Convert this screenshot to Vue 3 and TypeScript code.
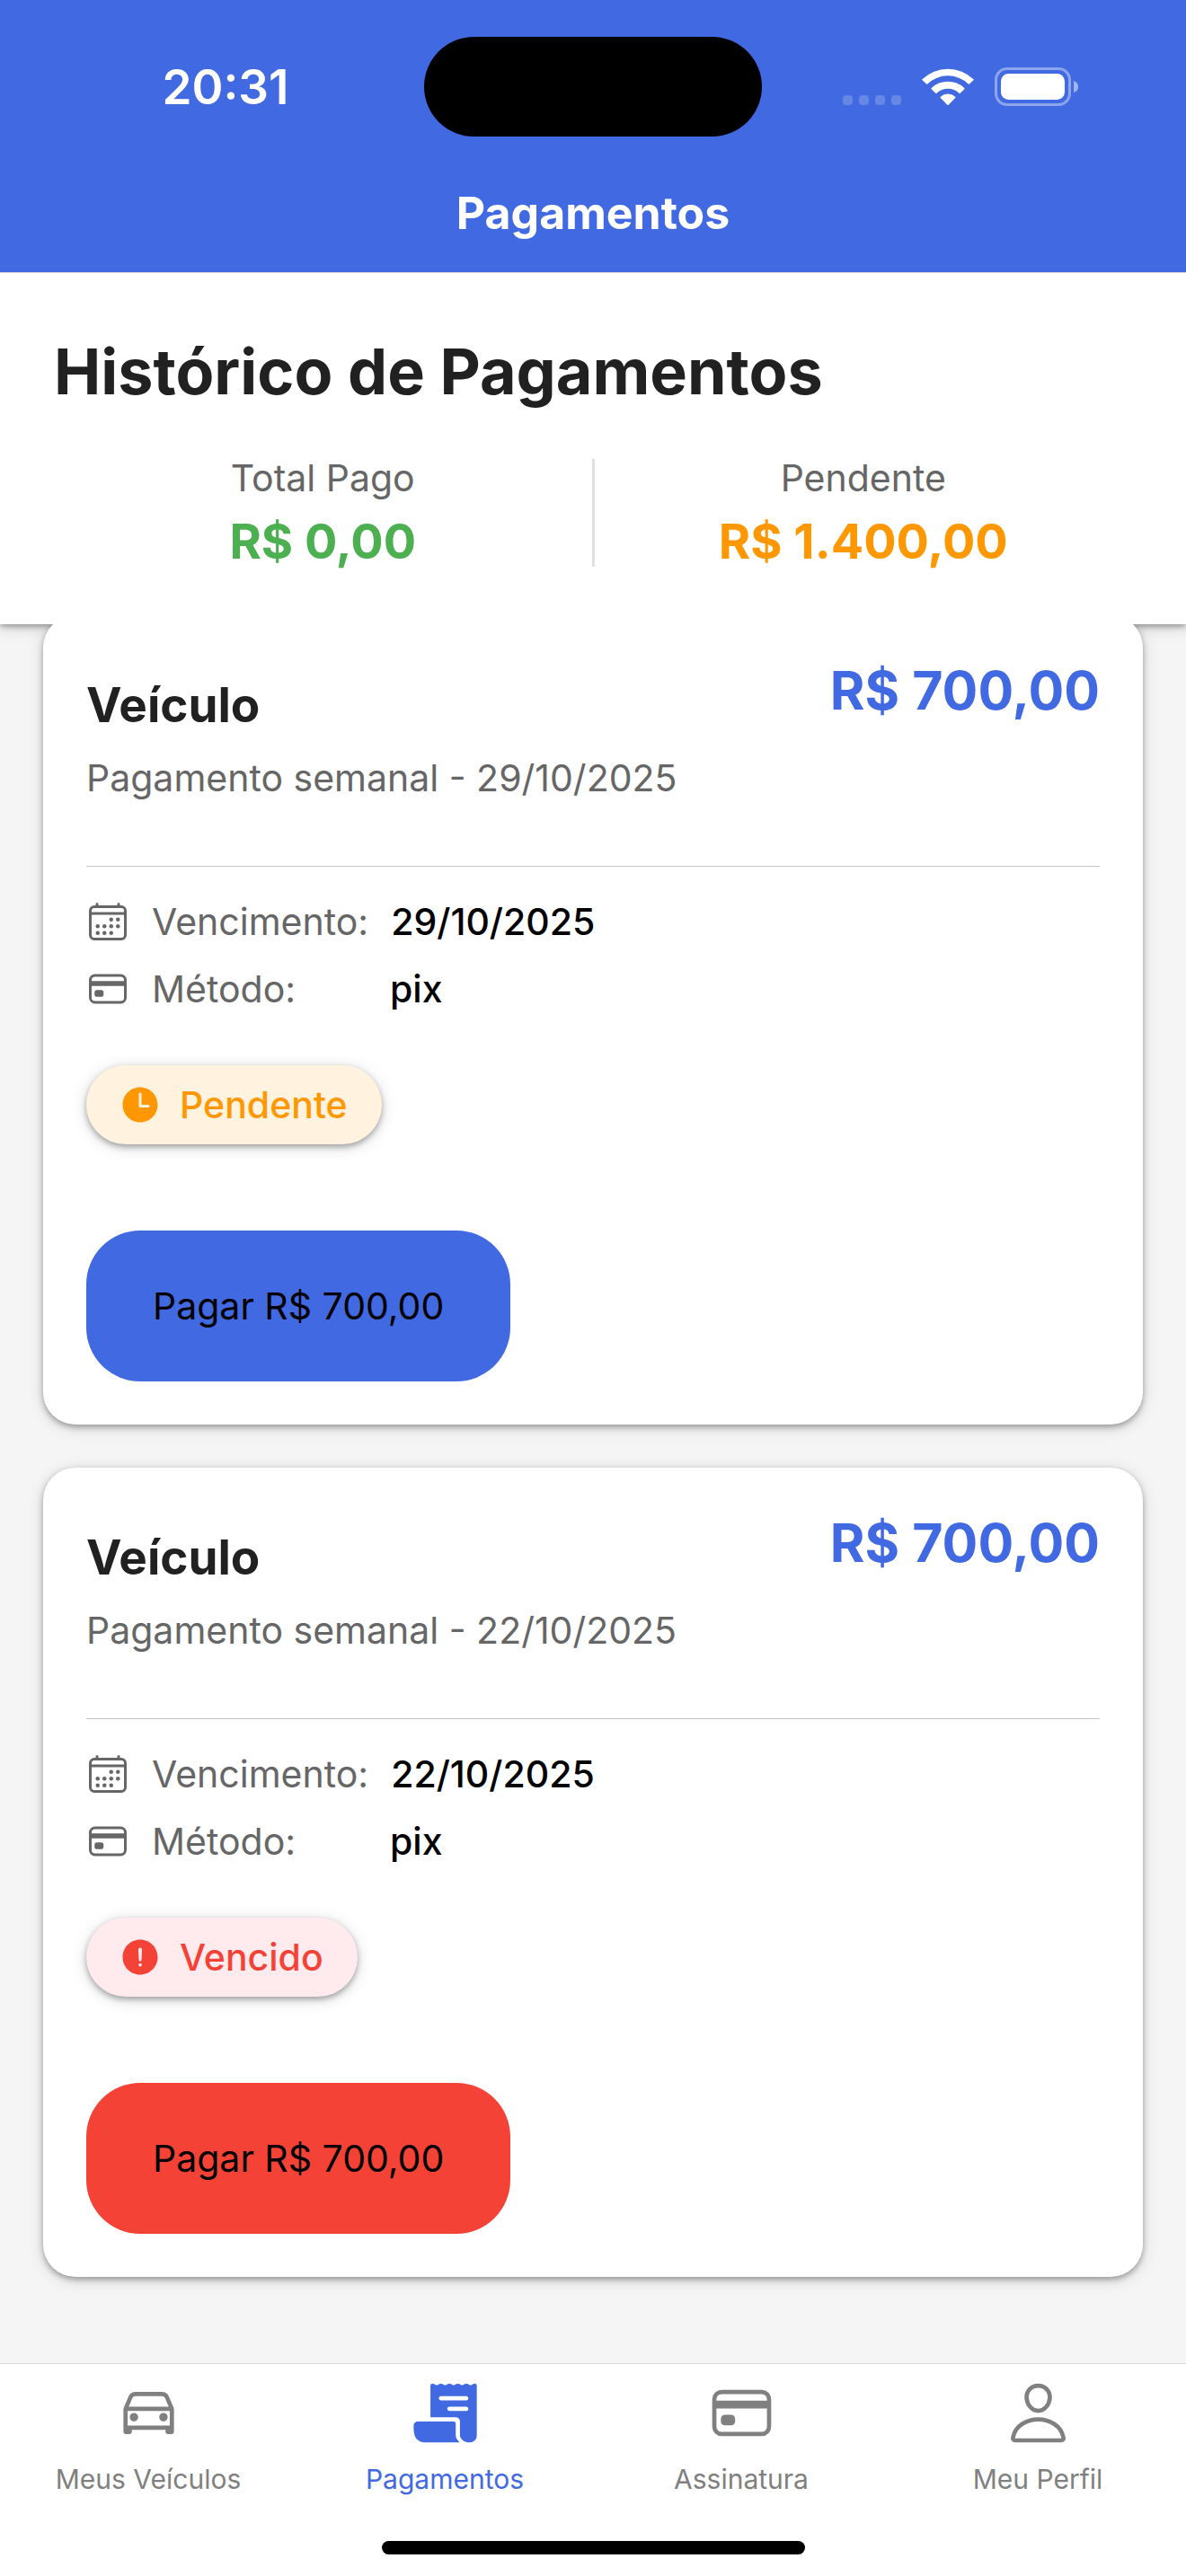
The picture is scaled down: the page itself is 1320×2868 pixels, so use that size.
<script setup lang="ts">
type Status = 'pending' | 'overdue'

interface Payment {
  id: number
  title: string
  description: string
  amount: string
  dueDate: string
  method: string
  status: Status
  statusLabel: string
}

interface Tab {
  id: 'car' | 'receipt' | 'card' | 'person'
  label: string
  active: boolean
}

const payments: Payment[] = [
  {
    id: 1,
    title: 'Veículo',
    description: 'Pagamento semanal - 29/10/2025',
    amount: 'R$ 700,00',
    dueDate: '29/10/2025',
    method: 'pix',
    status: 'pending',
    statusLabel: 'Pendente',
  },
  {
    id: 2,
    title: 'Veículo',
    description: 'Pagamento semanal - 22/10/2025',
    amount: 'R$ 700,00',
    dueDate: '22/10/2025',
    method: 'pix',
    status: 'overdue',
    statusLabel: 'Vencido',
  },
]

const tabs: Tab[] = [
  { id: 'car', label: 'Meus Veículos', active: false },
  { id: 'receipt', label: 'Pagamentos', active: true },
  { id: 'card', label: 'Assinatura', active: false },
  { id: 'person', label: 'Meu Perfil', active: false },
]
</script>

<template>
  <div class="screen">
    <header class="app-bar">
      <div class="status-bar">
        <span class="clock">20:31</span>
        <span class="island"></span>
        <div class="indicators">
          <svg class="signal" viewBox="0 0 65 43" aria-hidden="true">
            <rect x="0" y="31" width="11" height="11" rx="4" />
            <rect x="18" y="31" width="11" height="11" rx="4" />
            <rect x="36" y="31" width="11" height="11" rx="4" />
            <rect x="54" y="31" width="11" height="11" rx="4" />
          </svg>
          <svg class="wifi" viewBox="0 0 58 43" aria-hidden="true">
            <path d="M0.5 13.2A41 41 0 0 1 57.5 13.2Q58 13.8 57.5 14.3L52.9 18.5Q52.3 18.9 51.7 18.4A33 33 0 0 0 6.3 18.4Q5.7 18.9 5.1 18.5L0.5 14.3Q0 13.8 0.5 13.2Z" />
            <path d="M10.7 23A26.5 26.5 0 0 1 47.3 23Q47.9 23.6 47.3 24.2L42.7 28.7Q42.1 29.2 41.5 28.7A18.6 18.6 0 0 0 16.5 28.7Q15.9 29.2 15.3 28.7L10.7 24.2Q10.1 23.6 10.7 23Z" />
            <path d="M20.8 32.7A12.4 12.4 0 0 1 37.2 32.7Q37.9 33.4 37.2 34.1L29.7 41.7Q29 42.4 28.3 41.7L20.8 34.1Q20.1 33.4 20.8 32.7Z" />
          </svg>
          <svg class="battery" viewBox="0 0 93 43" aria-hidden="true">
            <rect x="1.5" y="1.5" width="82" height="40" rx="12.5" fill="none" stroke="#fff" stroke-opacity="0.4" stroke-width="3" />
            <rect x="7" y="7" width="71" height="29" rx="8.5" fill="#fff" />
            <path d="M88 15Q93 16.5 93 21.5T88 28Z" fill="#fff" fill-opacity="0.5" />
          </svg>
        </div>
      </div>
      <div class="app-title">Pagamentos</div>
    </header>

    <section class="summary">
      <h1>Histórico de Pagamentos</h1>
      <div class="stats">
        <div class="stat">
          <span class="stat-label">Total Pago</span>
          <strong class="stat-value paid">R$ 0,00</strong>
        </div>
        <div class="stat-divider"></div>
        <div class="stat">
          <span class="stat-label">Pendente</span>
          <strong class="stat-value due">R$ 1.400,00</strong>
        </div>
      </div>
    </section>

    <main class="list">
      <article v-for="payment in payments" :key="payment.id" class="card" :class="payment.status">
        <div class="card-head">
          <div class="card-info">
            <h2>{{ payment.title }}</h2>
            <p>{{ payment.description }}</p>
          </div>
          <strong class="amount">{{ payment.amount }}</strong>
        </div>
        <hr />
        <dl class="details">
          <div class="detail">
            <svg class="icon" viewBox="0 0 512 512" aria-hidden="true">
              <g fill="none" stroke="currentColor" stroke-width="32" stroke-linejoin="round">
                <rect x="48" y="80" width="416" height="384" rx="48" />
                <path stroke-linecap="round" d="M128 48v32M384 48v32" />
                <path d="M464 160H48" />
              </g>
              <g fill="currentColor">
                <circle cx="296" cy="232" r="24" />
                <circle cx="376" cy="232" r="24" />
                <circle cx="136" cy="312" r="24" />
                <circle cx="216" cy="312" r="24" />
                <circle cx="296" cy="312" r="24" />
                <circle cx="376" cy="312" r="24" />
                <circle cx="136" cy="392" r="24" />
                <circle cx="216" cy="392" r="24" />
                <circle cx="296" cy="392" r="24" />
              </g>
            </svg>
            <dt>Vencimento:</dt>
            <dd>{{ payment.dueDate }}</dd>
          </div>
          <div class="detail">
            <svg class="icon" viewBox="0 0 512 512" fill="none" stroke="currentColor" stroke-linejoin="round" aria-hidden="true">
              <rect x="48" y="96" width="416" height="320" rx="56" stroke-width="32" />
              <path stroke-width="60" d="M48 192h416M128 300h48v20h-48z" />
            </svg>
            <dt>Método:</dt>
            <dd>{{ payment.method }}</dd>
          </div>
        </dl>
        <div class="chip">
          <svg class="icon" viewBox="0 0 512 512" fill="currentColor" aria-hidden="true">
            <path
              v-if="payment.status === 'pending'"
              d="M256 48C141.13 48 48 141.13 48 256s93.13 208 208 208 208-93.13 208-208S370.87 48 256 48zm96 240h-96a16 16 0 01-16-16V128a16 16 0 0132 0v128h80a16 16 0 010 32z"
            />
            <path
              v-else
              d="M256 48C141.31 48 48 141.31 48 256s93.31 208 208 208 208-93.31 208-208S370.69 48 256 48zm0 319.91a20 20 0 1120-20 20 20 0 01-20 20zm21.72-201.15l-5.74 122a16 16 0 01-32 0l-5.74-121.94v-.05a21.74 21.74 0 1143.44 0z"
            />
          </svg>
          <span>{{ payment.statusLabel }}</span>
        </div>
        <button type="button" class="pay">Pagar {{ payment.amount }}</button>
      </article>
    </main>

    <footer class="bottom">
      <nav class="tabs">
        <a v-for="tab in tabs" :key="tab.id" :href="'#' + tab.id" class="tab" :class="{ active: tab.active }">
          <svg viewBox="0 0 512 512" aria-hidden="true">
            <g v-if="tab.id === 'car'" fill="none" stroke="currentColor" stroke-width="32" stroke-linecap="round" stroke-linejoin="round">
              <path d="M80 224l37.78-88.15C123.93 121.5 139.6 112 157.11 112h197.78c17.51 0 33.18 9.5 39.33 23.85L432 224M80 224h352v144H80zM112 368v32H80v-32M432 368v32h-32v-32" />
              <circle cx="144" cy="288" r="16" fill="currentColor" />
              <circle cx="368" cy="288" r="16" fill="currentColor" />
            </g>
            <g v-else-if="tab.id === 'receipt'" fill="currentColor">
              <path d="M483.82 32.45a16.28 16.28 0 00-11.23 1.37L448 46.1l-24.8-12.4a16 16 0 00-14.31 0l-25.11 12.41L359 33.7a16 16 0 00-14.36 0L320 46.07l-24.45-12.34a16 16 0 00-14.35-.06L256 46.12l-24.8-12.43a16.05 16.05 0 00-14.33 0L192 46.1l-24.84-12.41a16 16 0 00-19.36 3.94 16.25 16.25 0 00-3.8 10.65V288l.05.05H336a32 32 0 0132 32V424c0 30.93 33.07 56 64 56h12a52 52 0 0052-52V48a16 16 0 00-12.18-15.55zM416 240H288.5c-8.64 0-16.1-6.64-16.48-15.28A16 16 0 01288 208h127.5c8.64 0 16.1 6.64 16.48 15.28A16 16 0 01416 240zm0-80H224.5c-8.64 0-16.1-6.64-16.48-15.28A16 16 0 01224 128h191.5c8.64 0 16.1 6.64 16.48 15.28A16 16 0 01416 160z" />
              <path d="M336 424v-88a16 16 0 00-16-16H48a32.1 32.1 0 00-32 32.05c0 50.55 5.78 71.57 14.46 87.57C45.19 466.79 71.86 480 112 480h245.68a4 4 0 002.85-6.81C351.07 463.7 336 451 336 424z" />
            </g>
            <g v-else-if="tab.id === 'card'" fill="none" stroke="currentColor" stroke-linejoin="round">
              <rect x="48" y="96" width="416" height="320" rx="56" stroke-width="32" />
              <path stroke-width="60" d="M48 192h416M128 300h48v20h-48z" />
            </g>
            <g v-else fill="none" stroke="currentColor" stroke-width="32" stroke-linecap="round" stroke-linejoin="round">
              <path d="M344 144c-3.92 52.87-44 96-88 96s-84.15-43.12-88-96c-4-55 35-96 88-96s92 42 88 96z" />
              <path d="M256 304c-87 0-175.3 48-191.64 138.6C62.39 453.52 68.57 464 80 464h352c11.44 0 17.62-10.48 15.65-21.4C431.3 352 343 304 256 304z" />
            </g>
          </svg>
          <span>{{ tab.label }}</span>
        </a>
      </nav>
      <div class="home-indicator"></div>
    </footer>
  </div>
</template>

<style>
body {
  margin: 0;
  background: #f5f5f5;
}
</style>

<style scoped>
* {
  box-sizing: border-box;
}

.screen {
  display: flex;
  flex-direction: column;
  min-height: 100vh;
  background: #f5f5f5;
  color: #212121;
  font-family: Inter, 'Liberation Sans', sans-serif;
}

.app-bar {
  position: relative;
  z-index: 1;
  background: #4169e1;
  box-shadow: 0 1px 0 #d8d8d8;
  color: #fff;
}

.status-bar {
  display: grid;
  grid-template-columns: 1fr 376px 1fr;
  align-items: center;
  padding: 41px 30px 19px;
}

.clock {
  text-align: center;
  font-size: 53px;
  line-height: 60px;
  font-weight: 600;
}

.island {
  height: 111px;
  border-radius: 56px;
  background: #000;
}

.indicators {
  display: flex;
  justify-content: center;
  align-items: center;
  gap: 23px;
}

.indicators svg {
  height: 43px;
  flex: none;
}

.signal {
  width: 65px;
  fill: rgba(255, 255, 255, 0.2);
}

.wifi {
  width: 58px;
  fill: #fff;
}

.battery {
  width: 93px;
}

.app-title {
  text-align: center;
  font-size: 50px;
  line-height: 132px;
  font-weight: 700;
}

.summary {
  padding: 60px 60px 64px;
  background: #fff;
  box-shadow: 0 3px 6px rgba(0, 0, 0, 0.3), 0 3px 18px rgba(0, 0, 0, 0.15);
}

h1 {
  margin: 0 0 46px;
  font-size: 70px;
  line-height: 102px;
  font-weight: 700;
}

.stats {
  display: flex;
}

.stat {
  flex: 1;
  display: flex;
  flex-direction: column;
  justify-content: space-between;
  align-items: center;
}

.stat-divider {
  width: 3px;
  height: 120px;
  background: #e0e0e0;
}

.stat-label {
  font-size: 41px;
  line-height: 42px;
  color: #666;
}

.stat-value {
  font-size: 54px;
  line-height: 56px;
  font-weight: 700;
}

.paid {
  color: #4caf50;
}

.due {
  color: #ff9800;
}

.list {
  position: relative;
  flex: 1;
  display: flex;
  flex-direction: column;
  gap: 48px;
  padding: 0 48px 48px;
  overflow: hidden;
}

.card {
  padding: 48px;
  border-radius: 36px;
  background: #fff;
  box-shadow: 0 3px 6px rgba(0, 0, 0, 0.3), 0 3px 18px rgba(0, 0, 0, 0.15);
}

.card:first-child {
  margin-top: -10px;
}

.card-head {
  display: flex;
  justify-content: space-between;
  align-items: flex-start;
}

.card-info {
  padding-top: 16px;
}

h2 {
  margin: 0 0 15px;
  font-size: 53px;
  line-height: 72px;
  font-weight: 700;
}

p {
  margin: 0;
  font-size: 41px;
  line-height: 60px;
  color: #666;
}

.amount {
  font-size: 59px;
  line-height: 72px;
  font-weight: 700;
  color: #4169e1;
}

hr {
  height: 1px;
  margin: 68px 0 31px;
  border: 0;
  background: #cac4d0;
}

.details {
  display: flex;
  flex-direction: column;
  gap: 15px;
  margin: 0 0 55px;
  font-size: 41px;
  line-height: 60px;
}

.detail {
  display: flex;
  align-items: center;
  gap: 25px;
  color: #666;
}

.icon {
  width: 48px;
  height: 48px;
  flex: none;
}

dt {
  min-width: 240px;
}

dd {
  margin: 0;
  color: #000;
  font-weight: 500;
}

.chip {
  display: flex;
  align-items: center;
  gap: 20px;
  width: fit-content;
  padding: 14px 38px 14px 36px;
  border-radius: 44px;
  font-size: 41px;
  line-height: 60px;
  font-weight: 500;
  box-shadow: 0 3px 6px rgba(0, 0, 0, 0.3), 0 3px 18px rgba(0, 0, 0, 0.15);
}

.pending .chip {
  background: #fff3e0;
  color: #ff9800;
}

.overdue .chip {
  background: #ffebee;
  color: #f44336;
}

.pay {
  display: block;
  margin-top: 96px;
  padding: 54px 74px;
  border: 0;
  border-radius: 60px;
  font: 400 41px/60px Inter, 'Liberation Sans', sans-serif;
  color: #000;
}

.pending .pay {
  background: #4169e1;
}

.overdue .pay {
  background: #f44336;
}

.bottom {
  padding-bottom: 24px;
  border-top: 1px solid #d8d8d8;
  background: #fff;
}

.tabs {
  display: flex;
}

.tab {
  flex: 1;
  display: flex;
  flex-direction: column;
  align-items: center;
  gap: 18px;
  padding: 17px 0 51px;
  font-size: 30px;
  line-height: 36px;
  color: #808080;
  text-decoration: none;
}

.tab.active {
  color: #4169e1;
}

.tab svg {
  width: 75px;
  height: 75px;
}

.home-indicator {
  width: 471px;
  height: 15px;
  margin: 0 auto;
  border-radius: 8px;
  background: #000;
}
</style>
